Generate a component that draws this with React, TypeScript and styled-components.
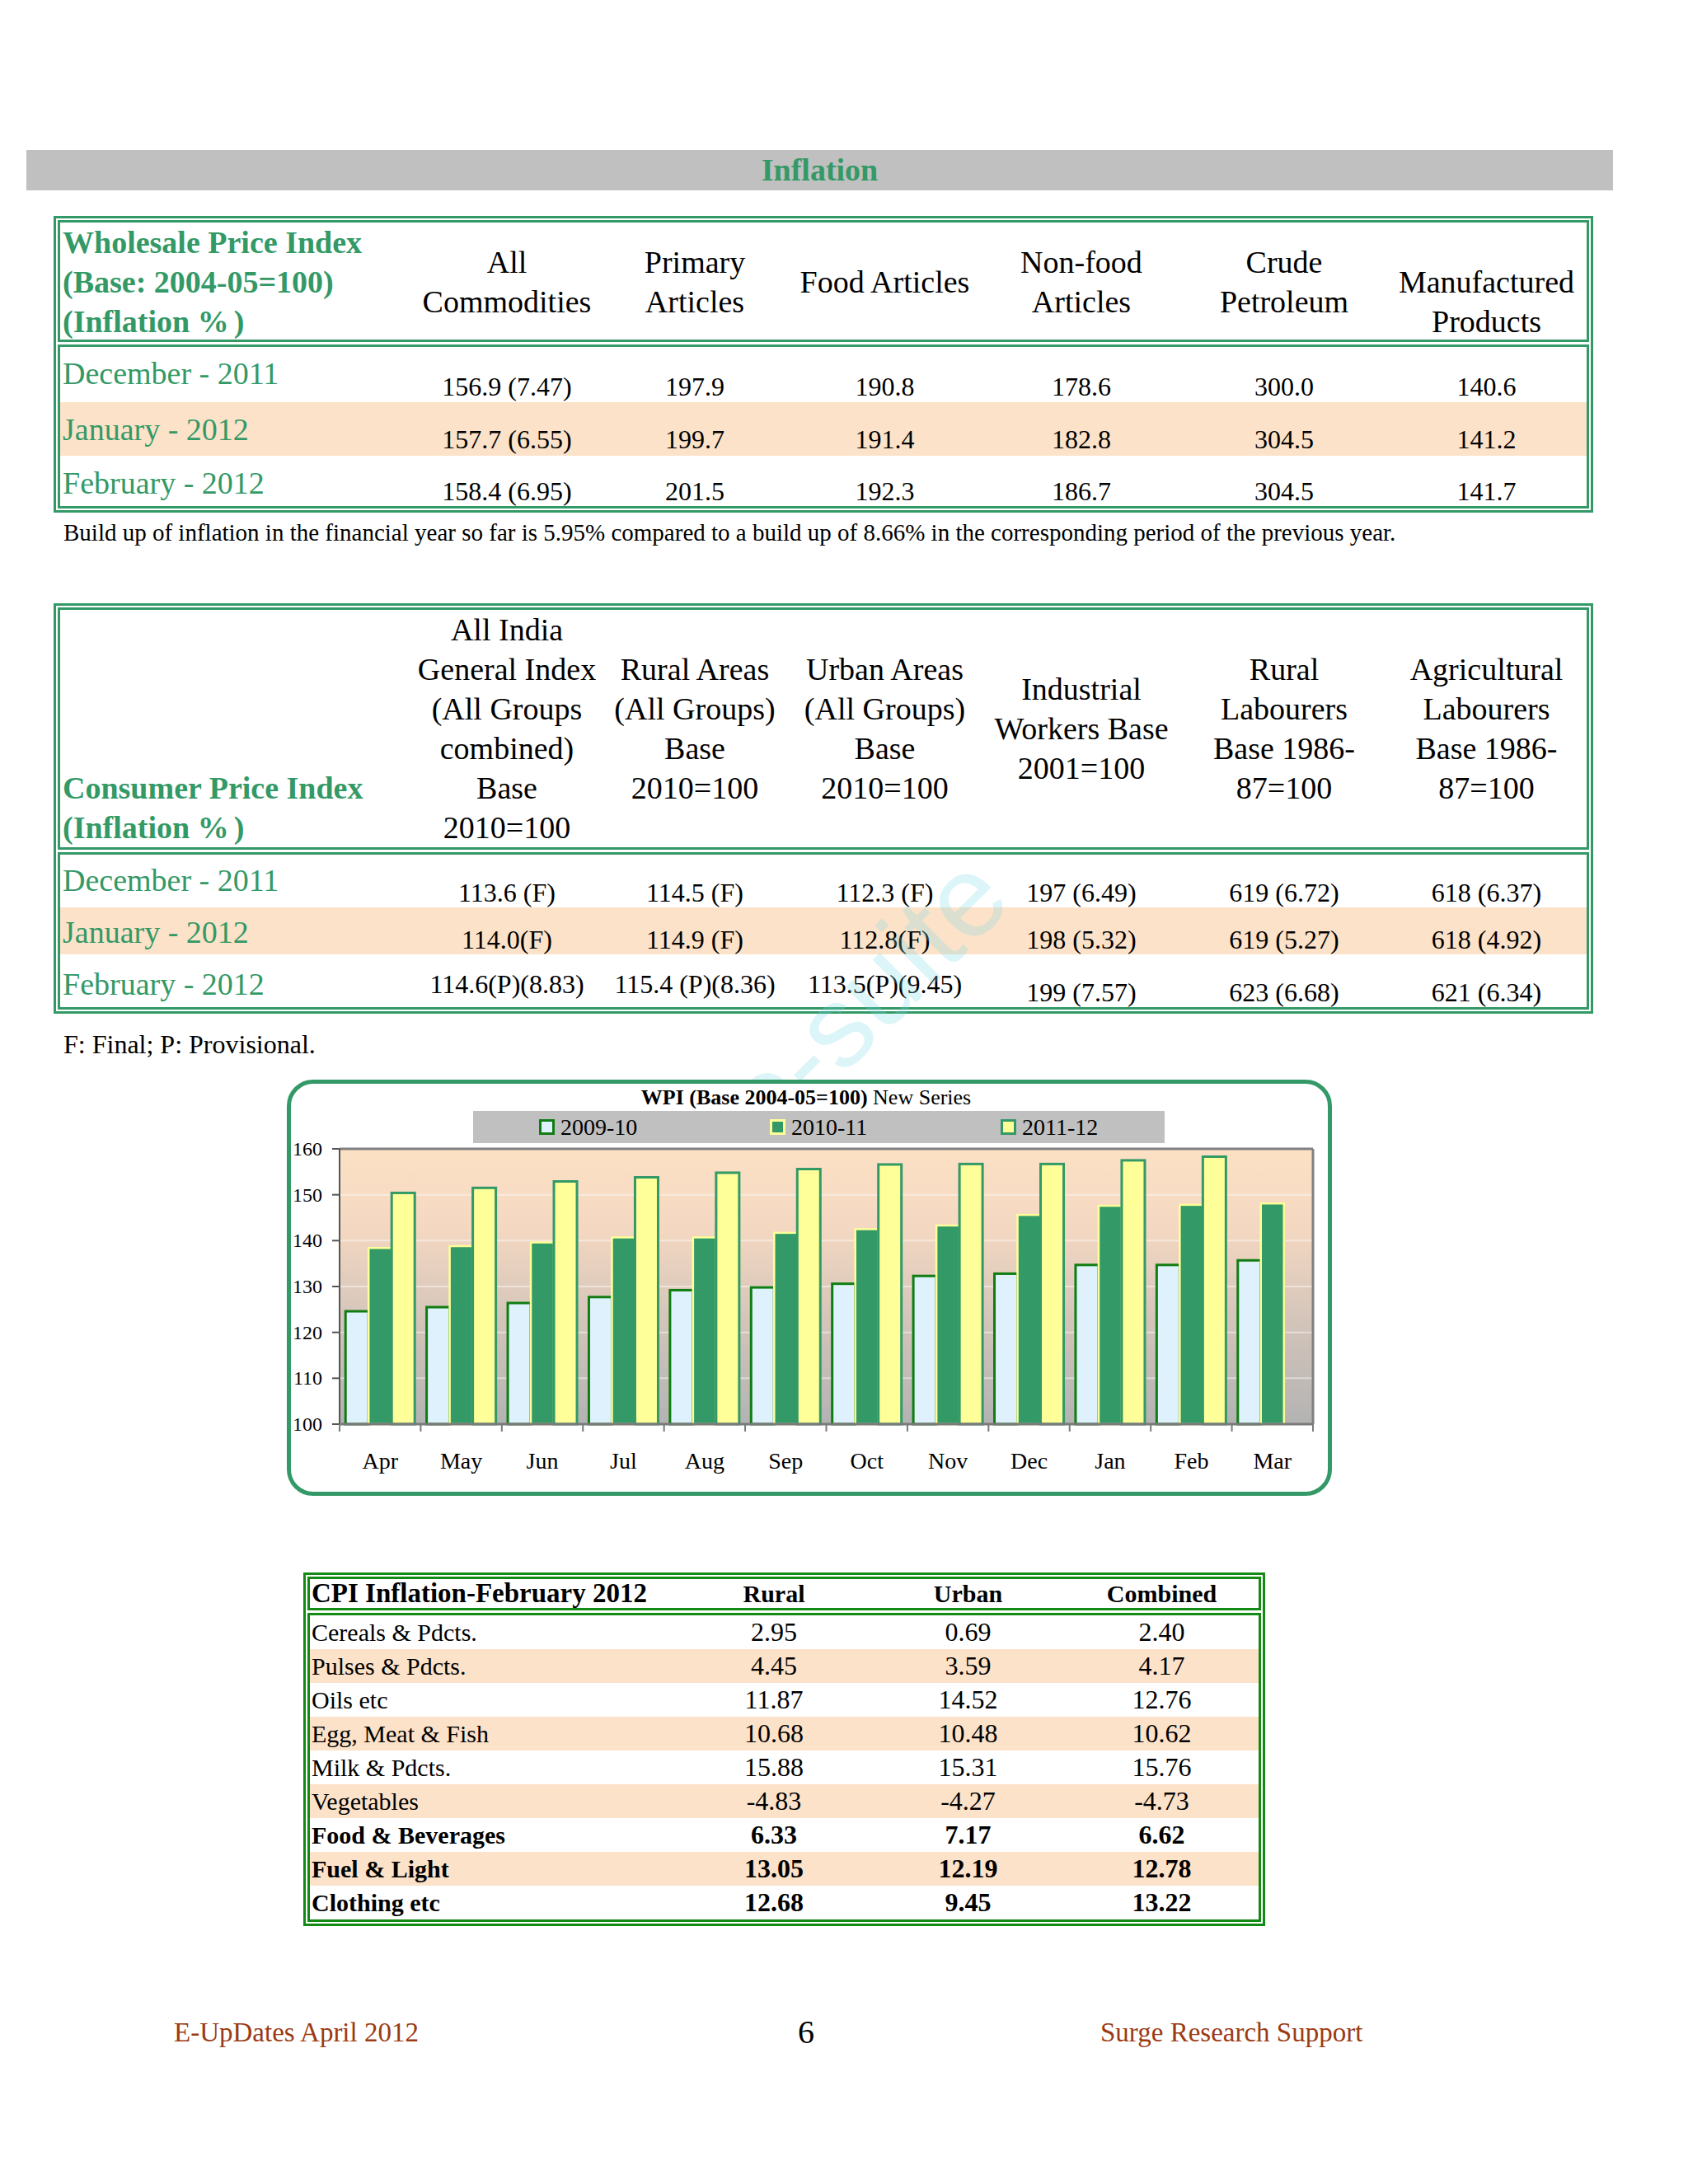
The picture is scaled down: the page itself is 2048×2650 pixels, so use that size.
import React from "react";
import styled, { createGlobalStyle } from "styled-components";

const GREEN = "#339966";
const PEACH = "#fce2c9";
const DEEP_GREEN = "#138a13";
const BROWN = "#9c3a12";
const FONT = `"Liberation Serif", "Times New Roman", serif`;

const GlobalStyle = createGlobalStyle`
  html, body { margin: 0; padding: 0; background: #ffffff; }
  body { font-family: ${FONT}; color: #000000; }
  * { box-sizing: border-box; }
`;

const Page = styled.div`
  position: relative;
  width: 2048px;
  height: 2650px;
  display: flex;
  flex-direction: column;
  align-items: flex-start;
  overflow: hidden;
  background: #ffffff;
  font-family: ${FONT};
`;

const Banner = styled.div`
  margin: 182px 0 0 32px;
  width: 1925px;
  height: 49px;
  background: #c0c0c0;
  display: flex;
  align-items: center;
  justify-content: center;
  color: ${GREEN};
  font-weight: 700;
  font-size: 38px;
  line-height: 49px;
`;

const Frame = styled.div<{ $mt: number; $ml: number; $w: number; $color: string }>`
  margin: ${(p) => p.$mt}px 0 0 ${(p) => p.$ml}px;
  width: ${(p) => p.$w}px;
  border: 3px solid ${(p) => p.$color};
  padding: 2px;
  display: flex;
  flex-direction: column;
  gap: 3px;
`;

const Section = styled.div<{ $color: string }>`
  border: 3px solid ${(p) => p.$color};
`;

const COLS = "428px 228px 228px 233px 244px 248px 243px";

const HeadGrid = styled.div<{ $h: number }>`
  display: grid;
  grid-template-columns: ${COLS};
  height: ${(p) => p.$h}px;
  font-size: 38px;
  line-height: 48px;
`;

const HeadLabel = styled.div<{ $align: "start" | "end" }>`
  align-self: ${(p) => p.$align};
  padding-left: 3px;
  color: ${GREEN};
  font-weight: 700;
  white-space: nowrap;
`;

const HeadCell = styled.div<{ $align?: "center" | "end" }>`
  align-self: ${(p) => p.$align || "center"};
  text-align: center;
  white-space: nowrap;
`;

const Pct = styled.span`
  margin-right: 6px;
`;

const BodyRow = styled.div<{ $h: number; $bg: string }>`
  display: grid;
  grid-template-columns: ${COLS};
  height: ${(p) => p.$h}px;
  background: ${(p) => p.$bg};
`;

const RowLabel = styled.div<{ $pt: number }>`
  align-self: start;
  padding: ${(p) => p.$pt}px 0 0 3px;
  color: ${GREEN};
  font-size: 38px;
  line-height: 44px;
  white-space: nowrap;
`;

const RowValue = styled.div<{ $pb: number }>`
  align-self: end;
  padding-bottom: ${(p) => p.$pb}px;
  font-size: 32px;
  line-height: 36px;
  text-align: center;
  white-space: nowrap;
`;

const Note = styled.div<{ $mt: number; $size: number; $lh: number }>`
  margin: ${(p) => p.$mt}px 0 0 77px;
  font-size: ${(p) => p.$size}px;
  line-height: ${(p) => p.$lh}px;
  white-space: nowrap;
`;

const Watermark = styled.div`
  position: absolute;
  left: 900px;
  top: 1290px;
  font-family: "Liberation Sans", Arial, sans-serif;
  font-size: 140px;
  line-height: 140px;
  color: rgba(120, 215, 228, 0.26);
  transform: rotate(-45deg);
  transform-origin: 0 50%;
  white-space: nowrap;
  pointer-events: none;
  z-index: 1;
`;

/* ---------- chart ---------- */

const ChartBox = styled.div`
  position: relative;
  z-index: 2;
  margin: 25px 0 0 348px;
  width: 1268px;
  height: 505px;
  border: 5px solid ${GREEN};
  border-radius: 32px;
  background: #ffffff;
  display: flex;
  flex-direction: column;
`;

const ChartTitle = styled.div`
  height: 33px;
  font-size: 26px;
  line-height: 33px;
  text-align: center;
  padding-right: 8px;
  white-space: nowrap;
`;

const Strong = styled.b`
  font-weight: 700;
`;

const LegendBar = styled.div`
  margin-left: 221px;
  width: 839px;
  height: 39px;
  background: #c0c0c0;
  display: flex;
  align-items: center;
  padding-left: 80px;
`;

const LegendItem = styled.div`
  flex: 0 0 280px;
  display: flex;
  align-items: center;
  gap: 7px;
  font-size: 28px;
  line-height: 30px;
  white-space: nowrap;
`;

const Swatch = styled.span<{ $fill: string; $stroke: string }>`
  display: inline-block;
  width: 19px;
  height: 19px;
  background: ${(p) => p.$fill};
  border: 3px solid ${(p) => p.$stroke};
`;

const ChartSvg = styled.svg`
  display: block;
  overflow: visible;
  font-family: ${FONT};
`;

const SERIES = [
  { name: "2009-10", fill: "#dff1fc", stroke: "#0f7d12", sw: 3 },
  { name: "2010-11", fill: "#339966", stroke: "#ffff99", sw: 2.5 },
  { name: "2011-12", fill: "#ffff99", stroke: "#339966", sw: 3 },
];

const DATA: (number | null)[][] = [
  [124.6, 125.5, 126.4, 127.7, 129.2, 129.8, 130.6, 132.3, 132.8, 134.7, 134.7, 135.7],
  [138.4, 138.8, 139.6, 140.7, 140.7, 141.7, 142.5, 143.3, 145.6, 147.6, 147.8, 148.1],
  [150.4, 151.5, 152.9, 153.8, 154.8, 155.6, 156.6, 156.7, 156.7, 157.5, 158.3, null],
];

const MONTHS = ["Apr", "May", "Jun", "Jul", "Aug", "Sep", "Oct", "Nov", "Dec", "Jan", "Feb", "Mar"];

const PX0 = 59;
const PX1 = 1240;
const PY0 = 7;
const PY1 = 341;
const CAT = (PX1 - PX0) / 12;
const yOf = (v: number) => PY1 - ((v - 100) * (PY1 - PY0)) / 60;

function WpiChart() {
  const ticks = [100, 110, 120, 130, 140, 150, 160];
  return (
    <ChartBox>
      <ChartTitle>
        <Strong>WPI (Base 2004-05=100)</Strong> New Series
      </ChartTitle>
      <LegendBar>
        {SERIES.map((s) => (
          <LegendItem key={s.name}>
            <Swatch $fill={s.fill} $stroke={s.stroke} />
            {s.name}
          </LegendItem>
        ))}
      </LegendBar>
      <ChartSvg width={1258} height={423} viewBox="0 0 1258 423">
        <defs>
          <linearGradient id="plotBg" x1="0" y1="0" x2="0" y2="1">
            <stop offset="0" stopColor="#fde1c5" />
            <stop offset="0.3" stopColor="#f3d7c1" />
            <stop offset="0.62" stopColor="#d4c5ba" />
            <stop offset="1" stopColor="#b3b3b3" />
          </linearGradient>
        </defs>
        <rect x={PX0} y={PY0} width={PX1 - PX0} height={PY1 - PY0} fill="url(#plotBg)" />
        {ticks.slice(1, -1).map((t) => (
          <line key={t} x1={PX0} x2={PX1} y1={yOf(t)} y2={yOf(t)} stroke="rgba(255,255,255,0.45)" strokeWidth={2} />
        ))}
        {DATA.map((series, si) =>
          series.map((v, i) => {
            if (v === null) return null;
            const x = PX0 + i * CAT + 7.2 + si * 28;
            const y = yOf(v);
            const s = SERIES[si];
            return (
              <rect
                key={`${si}-${i}`}
                x={x}
                y={y}
                width={28}
                height={PY1 - y}
                fill={s.fill}
                stroke={s.stroke}
                strokeWidth={s.sw}
              />
            );
          })
        )}
        <line x1={PX0} x2={PX1} y1={PY0} y2={PY0} stroke="#808080" strokeWidth={3} />
        <line x1={PX1} x2={PX1} y1={PY0} y2={PY1} stroke="#808080" strokeWidth={3} />
        <line x1={PX0} x2={PX0} y1={PY0} y2={PY1} stroke="#555555" strokeWidth={2} />
        <line x1={PX0} x2={PX1 + 1} y1={PY1} y2={PY1} stroke="#7a7a7a" strokeWidth={3} />
        {ticks.map((t) => (
          <g key={t}>
            <line x1={PX0 - 9} x2={PX0} y1={yOf(t)} y2={yOf(t)} stroke="#555555" strokeWidth={2} />
            <text x={38} y={yOf(t) + 8} fontSize={24} textAnchor="end" fill="#000">
              {t}
            </text>
          </g>
        ))}
        {Array.from({ length: 13 }, (_, i) => (
          <line key={i} x1={PX0 + i * CAT} x2={PX0 + i * CAT} y1={PY1} y2={PY1 + 9} stroke="#7a7a7a" strokeWidth={2} />
        ))}
        {MONTHS.map((m, i) => (
          <text key={m} x={PX0 + i * CAT + CAT / 2} y={395} fontSize={28} textAnchor="middle" fill="#000">
            {m}
          </text>
        ))}
      </ChartSvg>
    </ChartBox>
  );
}

/* ---------- CPI inflation table ---------- */

const T3_COLS = "445px 236px 235px 235px";

const T3Head = styled.div`
  display: grid;
  grid-template-columns: ${T3_COLS};
  height: 35px;
  align-items: center;
  font-weight: 700;
`;

const T3Title = styled.div`
  padding-left: 2px;
  font-size: 33px;
  line-height: 35px;
  white-space: nowrap;
`;

const T3ColHead = styled.div`
  text-align: center;
  font-size: 30px;
  line-height: 35px;
`;

const T3Row = styled.div<{ $bg: string; $bold: boolean }>`
  display: grid;
  grid-template-columns: ${T3_COLS};
  height: 41px;
  align-items: center;
  background: ${(p) => p.$bg};
  font-weight: ${(p) => (p.$bold ? 700 : 400)};
`;

const T3Label = styled.div`
  padding-left: 2px;
  font-size: 30px;
  line-height: 41px;
  white-space: nowrap;
`;

const T3Value = styled.div`
  text-align: center;
  font-size: 32px;
  line-height: 41px;
`;

const Footer = styled.div`
  margin: 109px 0 0 211px;
  display: flex;
  align-items: center;
  height: 40px;
`;

const FooterText = styled.div<{ $w: number }>`
  width: ${(p) => p.$w}px;
  color: ${BROWN};
  font-size: 33px;
  line-height: 40px;
  white-space: nowrap;
`;

const PageNum = styled.div`
  width: 369px;
  font-size: 40px;
  line-height: 40px;
  padding-left: 2px;
`;

/* ---------- data ---------- */

type Row = { label: string; h: number; pt: number; bg: string; vals: string[]; pbs: number[] };

const WPI_ROWS: Row[] = [
  { label: "December - 2011", h: 67, pt: 10, bg: "#ffffff", vals: ["156.9 (7.47)", "197.9", "190.8", "178.6", "300.0", "140.6"], pbs: [1, 1, 1, 1, 1, 1] },
  { label: "January - 2012", h: 65, pt: 11, bg: PEACH, vals: ["157.7 (6.55)", "199.7", "191.4", "182.8", "304.5", "141.2"], pbs: [2, 2, 2, 2, 2, 2] },
  { label: "February - 2012", h: 61, pt: 11, bg: "#ffffff", vals: ["158.4 (6.95)", "201.5", "192.3", "186.7", "304.5", "141.7"], pbs: [0, 0, 0, 0, 0, 0] },
];

const CPI_ROWS: Row[] = [
  { label: "December - 2011", h: 64, pt: 9, bg: "#ffffff", vals: ["113.6 (F)", "114.5 (F)", "112.3 (F)", "197 (6.49)", "619 (6.72)", "618 (6.37)"], pbs: [0, 0, 0, 0, 0, 0] },
  { label: "January - 2012", h: 57, pt: 8, bg: PEACH, vals: ["114.0(F)", "114.9 (F)", "112.8(F)", "198 (5.32)", "619 (5.27)", "618 (4.92)"], pbs: [0, 0, 0, 0, 0, 0] },
  { label: "February - 2012", h: 64, pt: 14, bg: "#ffffff", vals: ["114.6(P)(8.83)", "115.4 (P)(8.36)", "113.5(P)(9.45)", "199 (7.57)", "623 (6.68)", "621 (6.34)"], pbs: [10, 10, 10, 0, 0, 0] },
];

const T3_ROWS: { label: string; vals: string[]; bold?: boolean }[] = [
  { label: "Cereals & Pdcts.", vals: ["2.95", "0.69", "2.40"] },
  { label: "Pulses & Pdcts.", vals: ["4.45", "3.59", "4.17"] },
  { label: "Oils etc", vals: ["11.87", "14.52", "12.76"] },
  { label: "Egg, Meat & Fish", vals: ["10.68", "10.48", "10.62"] },
  { label: "Milk & Pdcts.", vals: ["15.88", "15.31", "15.76"] },
  { label: "Vegetables", vals: ["-4.83", "-4.27", "-4.73"] },
  { label: "Food & Beverages", vals: ["6.33", "7.17", "6.62"], bold: true },
  { label: "Fuel & Light", vals: ["13.05", "12.19", "12.78"], bold: true },
  { label: "Clothing etc", vals: ["12.68", "9.45", "13.22"], bold: true },
];

function BodyRows({ rows }: { rows: Row[] }) {
  return (
    <>
      {rows.map((r) => (
        <BodyRow key={r.label} $h={r.h} $bg={r.bg}>
          <RowLabel $pt={r.pt}>{r.label}</RowLabel>
          {r.vals.map((v, i) => (
            <RowValue key={i} $pb={r.pbs[i]}>
              {v}
            </RowValue>
          ))}
        </BodyRow>
      ))}
    </>
  );
}

const Lines = ({ lines }: { lines: string[] }) => (
  <>
    {lines.map((l, i) => (
      <React.Fragment key={i}>
        {i > 0 && <br />}
        {l}
      </React.Fragment>
    ))}
  </>
);

export default function App() {
  return (
    <Page>
      <GlobalStyle />
      <Banner>Inflation</Banner>

      <Frame $mt={31} $ml={65} $w={1868} $color={GREEN}>
        <Section $color={GREEN}>
          <HeadGrid $h={142}>
            <HeadLabel $align="start">
              Wholesale Price Index
              <br />
              (Base: 2004-05=100)
              <br />
              (Inflation <Pct>%</Pct>)
            </HeadLabel>
            <HeadCell>
              <Lines lines={["All", "Commodities"]} />
            </HeadCell>
            <HeadCell>
              <Lines lines={["Primary", "Articles"]} />
            </HeadCell>
            <HeadCell>Food Articles</HeadCell>
            <HeadCell>
              <Lines lines={["Non-food", "Articles"]} />
            </HeadCell>
            <HeadCell>
              <Lines lines={["Crude", "Petroleum"]} />
            </HeadCell>
            <HeadCell $align="end">
              <Lines lines={["Manufactured", "Products"]} />
            </HeadCell>
          </HeadGrid>
        </Section>
        <Section $color={GREEN}>
          <BodyRows rows={WPI_ROWS} />
        </Section>
      </Frame>

      <Note $mt={8} $size={29} $lh={32}>
        Build up of inflation in the financial year so far is 5.95% compared to a build up of 8.66% in the
        corresponding period of the previous year.
      </Note>

      <Frame $mt={70} $ml={65} $w={1868} $color={GREEN}>
        <Section $color={GREEN}>
          <HeadGrid $h={288}>
            <HeadLabel $align="end">
              Consumer Price Index
              <br />
              (Inflation <Pct>%</Pct>)
            </HeadLabel>
            <HeadCell>
              <Lines lines={["All India", "General Index", "(All Groups", "combined)", "Base", "2010=100"]} />
            </HeadCell>
            <HeadCell>
              <Lines lines={["Rural Areas", "(All Groups)", "Base", "2010=100"]} />
            </HeadCell>
            <HeadCell>
              <Lines lines={["Urban Areas", "(All Groups)", "Base", "2010=100"]} />
            </HeadCell>
            <HeadCell>
              <Lines lines={["Industrial", "Workers Base", "2001=100"]} />
            </HeadCell>
            <HeadCell>
              <Lines lines={["Rural", "Labourers", "Base 1986-", "87=100"]} />
            </HeadCell>
            <HeadCell>
              <Lines lines={["Agricultural", "Labourers", "Base 1986-", "87=100"]} />
            </HeadCell>
          </HeadGrid>
        </Section>
        <Section $color={GREEN}>
          <BodyRows rows={CPI_ROWS} />
        </Section>
      </Frame>

      <Note $mt={19} $size={32} $lh={36}>
        F: Final; P: Provisional.
      </Note>

      <Watermark>o-suite</Watermark>

      <WpiChart />

      <Frame $mt={93} $ml={368} $w={1167} $color={DEEP_GREEN}>
        <Section $color={DEEP_GREEN}>
          <T3Head>
            <T3Title>CPI Inflation-February 2012</T3Title>
            <T3ColHead>Rural</T3ColHead>
            <T3ColHead>Urban</T3ColHead>
            <T3ColHead>Combined</T3ColHead>
          </T3Head>
        </Section>
        <Section $color={DEEP_GREEN}>
          {T3_ROWS.map((r, i) => (
            <T3Row key={r.label} $bg={i % 2 === 1 ? PEACH : "#ffffff"} $bold={!!r.bold}>
              <T3Label>{r.label}</T3Label>
              {r.vals.map((v, j) => (
                <T3Value key={j}>{v}</T3Value>
              ))}
            </T3Row>
          ))}
        </Section>
      </Frame>

      <Footer>
        <FooterText $w={755}>E-UpDates April 2012</FooterText>
        <PageNum>6</PageNum>
        <FooterText $w={400}>Surge Research Support</FooterText>
      </Footer>
    </Page>
  );
}
